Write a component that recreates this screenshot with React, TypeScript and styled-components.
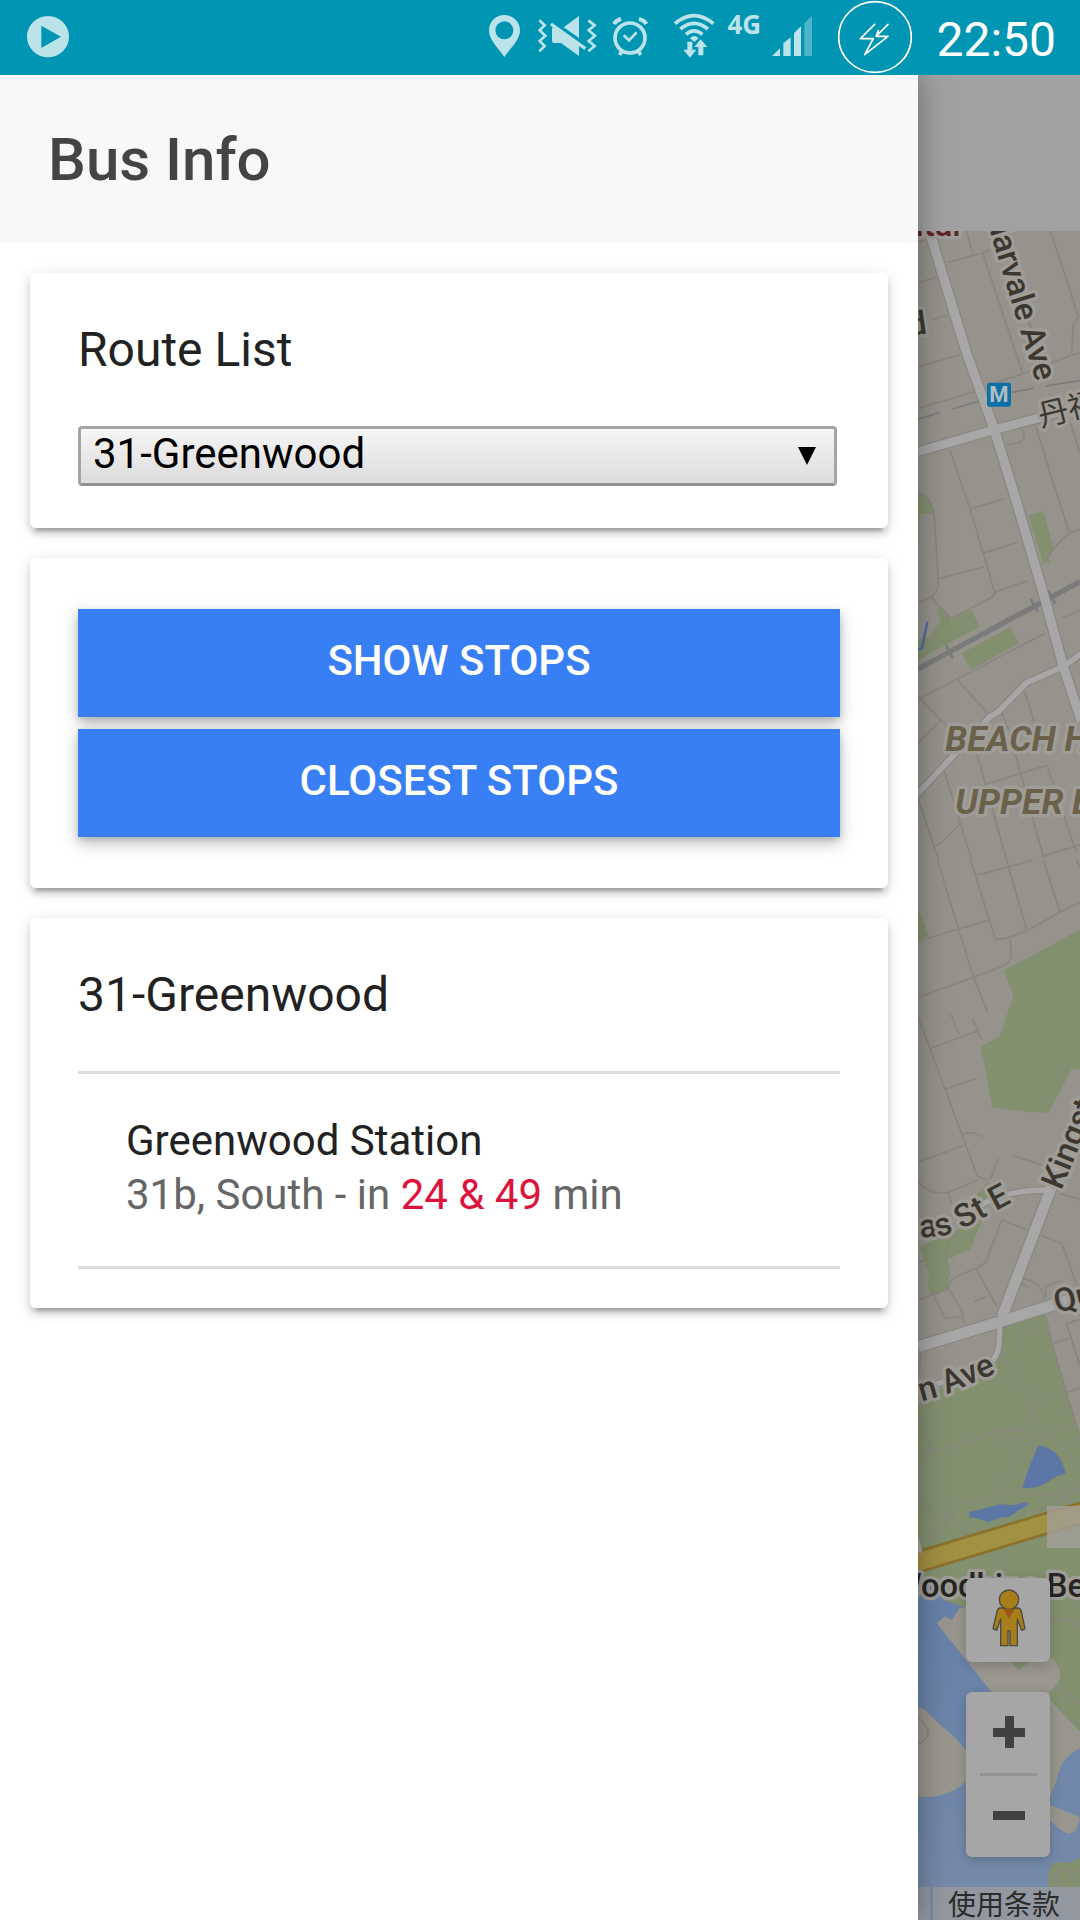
import React, { useState } from "react";
import styled, { createGlobalStyle } from "styled-components";

const GlobalStyle = createGlobalStyle`
  *, *::before, *::after { box-sizing: border-box; }
  body {
    margin: 0;
    background: #fff;
    font-family: Roboto, "Noto Sans CJK SC", sans-serif;
    color: #222;
  }
`;

const Screen = styled.div`
  display: flex;
  flex-direction: column;
  min-height: 100vh;
`;

/* ---------- status bar ---------- */

const StatusBar = styled.header`
  position: relative;
  z-index: 2;
  display: flex;
  justify-content: space-between;
  height: 75px;
  padding: 0 24px;
  background: #0095b3;
  color: #fff;
`;

const StatusGroup = styled.div`
  display: flex;
  align-items: center;
  gap: 12px;
`;

const Glyph = styled.svg<{ $w: number }>`
  display: block;
  flex: none;
  width: ${(p) => p.$w}px;
  height: 75px;
`;

const Network = styled.span`
  width: 33px;
  height: 40px;
  align-self: flex-start;
  padding-top: 6px;
  font: 700 26px/36px "Noto Sans", sans-serif;
  color: #bce3ea;
`;

const Clock = styled.time`
  padding-left: 12px;
  font-size: 48px;
  line-height: 75px;
  padding-top: 4px;
`;

const pale = "#bce3ea";

function StatusIcons() {
  return (
    <StatusGroup>
      <Glyph $w={40} viewBox="48 0 120 225" aria-label="Location">
        <path
          fill={pale}
          fillRule="evenodd"
          d="M103 45C77 45 57 65 57 91C57 121 84 143 103 171C122 143 150 121 150 91C150 65 129 45 103 45ZM103 64A27 27 0 1 1 103 118A27 27 0 1 1 103 64Z"
        />
      </Glyph>
      <Glyph $w={60} viewBox="204 0 180 225" aria-label="Vibrate">
        <path fill={pale} d="M281 82L327 48V114ZM246 84L250 82L327 132V168L273 129H252Q246 129 246 122Z" />
        <path d="M243 72L346 146" stroke={pale} strokeWidth="10" />
        <path
          d="M208 61L224 76L209 91L226 107L209 123L224 138L208 154M355 61L374 76L356 91L375 107L356 123L374 138L355 154"
          fill="none"
          stroke={pale}
          strokeWidth="8"
        />
      </Glyph>
      <Glyph $w={42} viewBox="420 0 126 225" aria-label="Alarm">
        <g fill="none" stroke={pale}>
          <circle cx="480" cy="114" r="45" strokeWidth="11" />
          <path d="M461 106L477 121L500 97" strokeWidth="8" />
          <path d="M432 72Q438 61 453 57M507 57Q523 61 529 72" strokeWidth="12" />
          <path d="M456 151L449 165M504 151L512 165" strokeWidth="11" />
        </g>
      </Glyph>
      <Glyph $w={51} viewBox="582 0 153 225" aria-label="Wi-Fi">
        <g fill="none" stroke={pale} strokeWidth="11">
          <path d="M615 71Q672 23 730 71" />
          <path d="M631 87Q672 53 714 87" />
          <path d="M648 103Q672 82 697 103" />
        </g>
        <path fill={pale} d="M660 115Q672 101 686 115L673 126Z" />
        <path
          fill={pale}
          d="M652 125H667V149H679L660 173L640 149H652ZM692 118L712 141H700V166H685V141H673Z"
        />
      </Glyph>
      <Network>4G</Network>
      <Glyph $w={54} viewBox="906 0 162 225" aria-label="Signal">
        <path fill={pale} d="M906 168L930 145V168ZM940 130L962 112V168H940ZM972 99L993 79V168H972Z" />
        <path fill="#4db5ca" d="M1003 70L1026 47V168H1003Z" />
      </Glyph>
      <Glyph $w={74} viewBox="114 0 222 225" aria-label="Power saving">
        <g fill="none" stroke="#fff">
          <ellipse cx="225" cy="111" rx="109" ry="106" strokeWidth="5" />
          <path
            d="M224 73L181 116H220L194 164L264 109H228L264 73M235 92L228 109M220 116L194 164"
            strokeWidth="5"
            strokeLinejoin="round"
            strokeLinecap="round"
          />
        </g>
      </Glyph>
      <Clock>22:50</Clock>
    </StatusGroup>
  );
}

/* ---------- drawer ---------- */

const Body = styled.div`
  display: flex;
  flex: 1;
`;

const Drawer = styled.aside`
  position: relative;
  z-index: 1;
  width: 85%;
  background: #fff;
  box-shadow: 0 0 30px rgba(0, 0, 0, 0.35);
`;

const DrawerBar = styled.div`
  display: flex;
  align-items: center;
  height: 168px;
  padding: 0 48px;
  background: #f8f8f8;
`;

const Title = styled.h1`
  margin: 0;
  font-size: 60px;
  font-weight: 500;
  color: #444;
`;

const Cards = styled.div`
  display: flex;
  flex-direction: column;
  gap: 30px;
  padding: 30px;
`;

const Card = styled.section<{ $pad: string }>`
  padding: ${(p) => p.$pad};
  border-radius: 6px;
  background: #fff;
  box-shadow: 0 6px 6px rgba(0, 0, 0, 0.14), 0 9px 3px -6px rgba(0, 0, 0, 0.2),
    0 3px 15px rgba(0, 0, 0, 0.12);
`;

const Heading = styled.h2`
  display: block;
  margin: 0 0 48px;
  font-size: 48px;
  font-weight: 400;
  line-height: 57px;
`;

const SelectBox = styled.div`
  display: grid;
  align-items: center;
  margin-right: 3px;
  > * {
    grid-area: 1 / 1;
  }
`;

const Select = styled.select`
  appearance: none;
  width: 100%;
  height: 60px;
  padding: 0 48px 4px 12px;
  border: 3px solid #a5a5a5;
  border-bottom-color: #919191;
  border-radius: 4px;
  background: linear-gradient(#f6f6f6, #dcdcdc);
  font: 400 42px/48px Roboto, sans-serif;
  color: #000;
`;

const Arrow = styled.svg`
  justify-self: end;
  width: 18px;
  height: 18px;
  margin-right: 21px;
  pointer-events: none;
`;

const ButtonStack = styled.div`
  display: grid;
  gap: 12px;
`;

const ActionButton = styled.button`
  height: 108px;
  padding: 0 0 4px;
  border: 0;
  background: #387ef5;
  box-shadow: 0 6px 15px rgba(0, 0, 0, 0.26), 0 3px 6px rgba(0, 0, 0, 0.12);
  font: 500 42px/48px Roboto, sans-serif;
  text-transform: uppercase;
  color: #fff;
`;

const StopList = styled.ul`
  margin: 0;
  padding: 0;
  list-style: none;
  border-top: 3px solid #ddd;
`;

const Stop = styled.li`
  padding: 40px 48px 44px;
  border-bottom: 3px solid #ddd;
  font-size: 42px;
  line-height: 54px;
`;

const Prediction = styled.p`
  margin: 0;
  color: #666;
`;

const Minutes = styled.span`
  color: crimson;
`;

/* ---------- map page behind the drawer ---------- */

const MapPage = styled.main`
  display: flex;
  flex: 1;
  flex-direction: column;
  min-width: 0;
  background: #a1a1a1;
`;

const MapBar = styled.div`
  height: 156px;
`;

const MapArea = styled.div`
  display: grid;
  flex: 1;
  grid-template: minmax(0, 1fr) / minmax(0, 1fr);
  overflow: hidden;
  background: #96938d;
  > * {
    grid-area: 1 / 1;
  }
`;

const MapDrawing = styled.svg`
  display: block;
  width: 100%;
  height: 100%;
  min-height: 0;
`;

const MapOverlay = styled.div`
  z-index: 0;
  display: flex;
  flex-direction: column;
  justify-content: flex-end;
`;

const Controls = styled.div`
  display: flex;
  flex-direction: column;
  align-items: flex-end;
  gap: 30px;
  padding: 0 30px 30px 0;
`;

const ControlBox = styled.div`
  display: flex;
  flex-direction: column;
  align-items: center;
  width: 84px;
  border-radius: 6px;
  background: #a6a6a6;
  box-shadow: 0 3px 12px rgba(0, 0, 0, 0.2);
`;

const ControlButton = styled.button<{ $h: number }>`
  display: grid;
  place-items: center;
  width: 84px;
  height: ${(p) => p.$h}px;
  padding: 0 0 2px 2px;
  border: 0;
  background: none;
`;

const Divider = styled.span`
  width: 57px;
  height: 3px;
  background: #939393;
`;

const MapFooter = styled.footer`
  display: flex;
  gap: 3px;
  height: 33px;
`;

const FooterTab = styled.span`
  width: 12px;
  background: #9096a0;
`;

const Terms = styled.a`
  flex: 1;
  padding-left: 15px;
  background: #9297a0;
  font: 400 28px/32px "Noto Sans CJK SC", sans-serif;
  white-space: nowrap;
  text-decoration: none;
  color: #2b2b2b;
`;

const MapLabel = styled.text`
  font-family: Roboto, "Noto Sans CJK SC", sans-serif;
  font-size: 98px;
  font-weight: 500;
  fill: #3c3830;
  stroke: #9f9d98;
  stroke-width: 20px;
  stroke-linejoin: round;
  paint-order: stroke;
`;

const StationLabel = styled(MapLabel)`
  font-size: 92px;
  font-weight: 400;
`;

const DistrictLabel = styled(MapLabel)`
  font-size: 106px;
  font-style: italic;
  font-weight: 700;
  fill: #6b614a;
`;

const green = "#83906f";
const sand = "#98968d";
const road = "#a7a7a7";
const edge = "#8a857f";
const pond = "#5c77a6";

const mainRoads = [
  { d: "M30 -200L40 20L146 367L226 587L291 797L376 1087L436 1307L490 1470", w: 28 },
  { d: "M0 662L226 597L376 557L500 518", w: 26 },
  { d: "M0 1687L216 1457L241 1442L326 1355L436 1307L500 1260", w: 17 },
  { d: "M130 2980C170 2910 270 2877 385 2877", w: 16 },
  { d: "M500 2640L440 2760L386 2907L251 3260", w: 32 },
  { d: "M0 3347L246 3272L500 3192", w: 33 },
  { d: "M246 3277L243 3337C239 3380 220 3400 190 3415L0 3477", w: 16 },
];

function MapCanvas() {
  return (
    <MapDrawing viewBox="0 0 486 5067" preserveAspectRatio="xMinYMin slice" role="img" aria-label="Map">
      <defs>
        <path id="dundas" d="M-350 3072L0 3022L81 3013Q116 3002 146 2987L282 2914" />
        <path id="eastern" d="M-360 3600L8 3512L86 3490L236 3425" />
        <linearGradient id="lake" x1="0" y1="0" x2="0" y2="1">
          <stop offset="0" stopColor="#6580aa" />
          <stop offset="1" stopColor="#778ba8" />
        </linearGradient>
      </defs>

      <g transform="translate(-54 3957)">
        <rect x="54" y="60" width="486" height="1050" fill="url(#lake)" />
        <path
          fill={green}
          d="M54 -40H540V545L450 450L400 330L357 360L332 336L198 175L130 150L110 120L80 100L54 110Z"
        />
        <path
          fill={sand}
          d="M110 220L135 198L155 210L178 175L200 172L332 336L357 360L395 330L450 320C482 345 490 380 470 405L448 425L450 450L540 545V595C490 620 475 660 470 690L450 740V765L540 802C532 850 515 852 500 850Q480 840 450 812L430 600L275 427Z"
        />
        <path fill={sand} d="M54 470L75 480L115 520Q160 555 198 600V695C150 735 100 745 54 740Z" />
        <path fill={green} d="M445 1010V975C450 935 475 930 500 940Q520 935 540 922V1050H500Z" />
        <path
          fill="none"
          stroke={edge}
          strokeWidth="5"
          d="M54 505Q85 530 85 550Q80 570 54 582M455 207C500 200 520 215 540 225M470 412L540 460M300 15L318 60M540 955L520 980L500 960Q470 955 468 985L480 1010"
        />
      </g>

      <g fill={green}>
        <path d="M0 787C31 792 44 822 46 849H4V935H0ZM331 852L376 840L406 949L391 977L396 992L376 999ZM54 1137L71 1125L101 1162L159 1137L186 1187L0 1287V1227L36 1217L68 1167ZM131 1267L276 1189L303 1237L158 1317Z" />
        <path d="M0 2037L16 2067L31 2115L0 2127ZM486 2095L346 2172L258 2217L286 2295L246 2414L189 2447L223 2629L321 2642L391 2646L461 2514L486 2517ZM171 2897L211 2852L235 2870L200 2910Z" />
        <path d="M6 3047L196 2960L156 3057L86 3085L94 3172L38 3194L28 3147L36 3142Z" />
        <path d="M246 3282L376 3250L416 3377L486 3607V3940H0V3500L200 3420L240 3385Z" />
      </g>

      <g fill="none" stroke={edge} strokeWidth="5">
        <path
          transform="translate(-54 -483)"
          d="M54 515L80 508M54 638L108 622M95 750L145 735M54 890L178 855M54 1015L225 965M200 483L218 552M145 578L270 542M248 550L368 910M452 483L535 740L520 765L515 850M280 940L368 912L515 855L540 848M382 740L405 810M150 1140L170 1200M320 1125L350 1120C370 1115 378 1100 368 1080M408 1070L445 1190M512 1060L540 1150"
        />
        <path
          transform="translate(-54 687)"
          d="M160 0L210 145L285 400L275 412L155 475M210 148L315 116M248 280L355 246M118 355L252 321M285 395L385 362M438 0L508 218L540 208M508 220C480 240 455 270 440 300M54 95C90 110 100 135 104 180L115 370C115 400 95 415 54 427M95 412L150 478M54 718L435 520M485 474L540 452M172 660L262 758M54 710L122 780L54 850M122 780L145 800M375 695L425 860M305 755L325 810M54 1015L115 1200M132 930L215 1200M230 880L320 1200M335 840L430 1190M258 972L440 916L530 1180M105 1158C140 1145 160 1105 182 1090M425 1190L540 1155"
        />
        <path
          transform="translate(-54 1887)"
          d="M112 0L175 205L222 355L262 455M212 0L285 235Q300 245 380 213L480 157L540 127M320 0L380 210M430 0L480 155M530 0L540 25M232 46L400 0M54 243L265 181M330 240C338 290 335 305 310 318L54 413M54 470L232 948L265 960M92 565L232 513M152 462L178 525M218 475L243 538M135 688L232 655M185 825C210 815 215 815 250 830M54 906L190 857M335 885L425 915M295 895L270 960M54 962C80 1000 110 1000 145 998L232 960M145 998L155 1030M480 1000L540 1018"
        />
        <path
          transform="translate(-54 2907)"
          d="M305 60L260 180Q250 195 228 205C150 235 148 240 145 265L185 330L192 370M228 205L290 320M222 305L262 288M305 60L485 130L530 255M54 187L75 182M54 300L145 268M100 285L135 355L185 350M368 235C410 245 425 260 435 295M435 260L482 243M435 260L440 290M360 250L385 262M435 345C465 470 510 620 540 725M460 432L508 415M540 358L500 370L540 500M500 577L540 565M62 460L58 520M175 95C140 120 135 160 140 180L150 230"
        />
        <path
          transform="translate(-54 2907)"
          strokeWidth="4"
          d="M310 470L395 375L440 420M300 483C350 480 340 520 360 540C400 620 400 640 395 680M54 750L105 752C180 740 260 700 300 692C360 685 440 700 480 730C530 780 540 850 530 880M300 715C350 770 350 800 290 885M62 640Q70 720 105 752C60 780 54 800 54 850M395 640C420 600 460 600 500 577M300 720C310 700 330 720 355 720C370 700 360 690 360 690L395 650M430 705L515 680M165 912C250 895 300 890 345 878L470 885L500 860L540 875M400 700C400 780 380 850 345 878M54 850C60 930 110 950 155 945L170 910M155 945L100 1030M155 945Q90 1000 80 1030M155 945L190 980C185 1000 190 1010 240 995M500 860C510 880 500 900 440 915L415 935M480 885L520 915"
        />
      </g>

      <path d="M0 565L66 544M103 534L201 505M281 484L346 472M382 465L486 449" fill="none" stroke="#7c7c7c" strokeWidth="5" />

      <g fill="none" stroke={edge}>
        {mainRoads.map((r) => (
          <path key={r.d} d={r.d} strokeWidth={r.w + 7} />
        ))}
      </g>
      <path d="M0 1314L486 1052" stroke="#7b7b7b" strokeWidth="16" />
      <path d="M84 1243L105 1282M338 1104L359 1143M391 1079L412 1118" stroke="#7b7b7b" strokeWidth="8" />
      <g fill="none" stroke={road}>
        {mainRoads.map((r) => (
          <path key={r.d} d={r.d} strokeWidth={r.w} />
        ))}
      </g>
      <path d="M0 1255L12 1251L28 1172" fill="none" stroke="#4c6da6" strokeWidth="7" />

      <g fill={pond}>
        <path d="M361 3644C396 3642 436 3677 443 3729Q416 3732 391 3752Q346 3777 314 3770Q331 3707 361 3644Z" />
        <path d="M153 3842L181 3837L246 3820L291 3822L326 3812L331 3822L296 3842L276 3857L246 3860L211 3874L176 3862L154 3859Z" />
      </g>
      <path d="M-14 3997L506 3841" stroke="#8b722c" strokeWidth="68" />
      <path d="M-14 3997L506 3841" stroke="#a29043" strokeWidth="52" />
      <path d="M-10 3900L8 3965" stroke={road} strokeWidth="12" />
      <rect x="387" y="3825" width="99" height="126" fill="#a39f98" fillOpacity="0.8" />

      <MapLabel x="128" y="16" textAnchor="end" style={{ fill: "#5c2522" }}>
        Hospital
      </MapLabel>
      <MapLabel transform="translate(354 454) rotate(73)" textAnchor="end">
        Cedarvale Ave
      </MapLabel>
      <MapLabel transform="translate(29 307) rotate(-8)" textAnchor="end">
        Rd
      </MapLabel>
      <rect x="207" y="455" width="72" height="72" rx="7" fill="#0a70a6" />
      <text x="243" y="514" textAnchor="middle" fontFamily="Roboto, sans-serif" fontSize="66" fontWeight="700" fill="#b4bcc2">
        M
      </text>
      <StationLabel transform="translate(369 588) rotate(-14)">丹福</StationLabel>
      <DistrictLabel x="82" y="1560">BEACH HILL</DistrictLabel>
      <DistrictLabel x="112" y="1750">UPPER BEACHES</DistrictLabel>
      <MapLabel transform="translate(430 2880) rotate(-68)">Kingston Rd</MapLabel>
      <MapLabel>
        <textPath href="#dundas" startOffset="100%" textAnchor="end">
          Dundas St E
        </textPath>
      </MapLabel>
      <MapLabel transform="translate(416 3246) rotate(-14)">Queen St E</MapLabel>
      <MapLabel>
        <textPath href="#eastern" startOffset="100%" textAnchor="end">
          Eastern Ave
        </textPath>
      </MapLabel>
      <MapLabel x="-76" y="4097" style={{ fill: "#262523" }}>
        Woodbine Beach
      </MapLabel>
    </MapDrawing>
  );
}

function Pegman() {
  return (
    <svg width="34" height="60" viewBox="273 115 102 180" aria-hidden="true">
      <g fill="#a87d1b" stroke="#4d4a42" strokeWidth="4" strokeLinejoin="round">
        <path d="M298 172H350Q358 172 361 182L372 234L362 239L349 205V285H327V240H321V285H299V205L287 239L276 234L288 182Q291 172 298 172Z" />
        <circle cx="324" cy="147" r="29" />
      </g>
      <path d="M308 175H341L324 204Z" fill="#9b5416" />
    </svg>
  );
}

const routes = ["31-Greenwood"];

export default function App() {
  const [route, setRoute] = useState(routes[0]);

  return (
    <>
      <GlobalStyle />
      <Screen>
        <StatusBar>
          <Glyph $w={48} viewBox="72 0 144 225" aria-label="Media playing">
            <ellipse cx="144" cy="110" rx="63" ry="62" fill={pale} />
            <path d="M124 77L183 110L124 144Z" fill="#0095b3" />
          </Glyph>
          <StatusIcons />
        </StatusBar>
        <Body>
          <Drawer>
            <DrawerBar>
              <Title>Bus Info</Title>
            </DrawerBar>
            <Cards>
              <Card $pad="48px 48px 42px">
                <Heading as="label" htmlFor="route">
                  Route List
                </Heading>
                <SelectBox>
                  <Select id="route" value={route} onChange={(e) => setRoute(e.target.value)}>
                    {routes.map((r) => (
                      <option key={r}>{r}</option>
                    ))}
                  </Select>
                  <Arrow viewBox="0 0 18 18" aria-hidden="true">
                    <path d="M0 0H18L9 18Z" />
                  </Arrow>
                </SelectBox>
              </Card>
              <Card $pad="51px 48px">
                <ButtonStack>
                  <ActionButton type="button">Show Stops</ActionButton>
                  <ActionButton type="button">Closest Stops</ActionButton>
                </ButtonStack>
              </Card>
              <Card $pad="48px 48px 39px">
                <Heading>{route}</Heading>
                <StopList>
                  <Stop>
                    Greenwood Station
                    <Prediction>
                      31b, South - in <Minutes>24 &amp; 49</Minutes> min
                    </Prediction>
                  </Stop>
                </StopList>
              </Card>
            </Cards>
          </Drawer>
          <MapPage>
            <MapBar />
            <MapArea>
              <MapCanvas />
              <MapOverlay>
                <Controls>
                  <ControlBox>
                    <ControlButton $h={84} type="button" aria-label="Street View">
                      <Pegman />
                    </ControlButton>
                  </ControlBox>
                  <ControlBox>
                    <ControlButton $h={81} type="button" aria-label="Zoom in">
                      <svg width="32" height="32" viewBox="0 0 32 32" aria-hidden="true">
                        <path d="M0 12H12V0H21V12H32V21H21V32H12V21H0Z" fill="#414141" />
                      </svg>
                    </ControlButton>
                    <Divider />
                    <ControlButton $h={81} type="button" aria-label="Zoom out">
                      <svg width="32" height="9" viewBox="0 0 32 9" aria-hidden="true">
                        <path d="M0 0H32V9H0Z" fill="#414141" />
                      </svg>
                    </ControlButton>
                  </ControlBox>
                </Controls>
                <MapFooter>
                  <FooterTab />
                  <Terms href="#terms">使用条款</Terms>
                </MapFooter>
              </MapOverlay>
            </MapArea>
          </MapPage>
        </Body>
      </Screen>
    </>
  );
}
